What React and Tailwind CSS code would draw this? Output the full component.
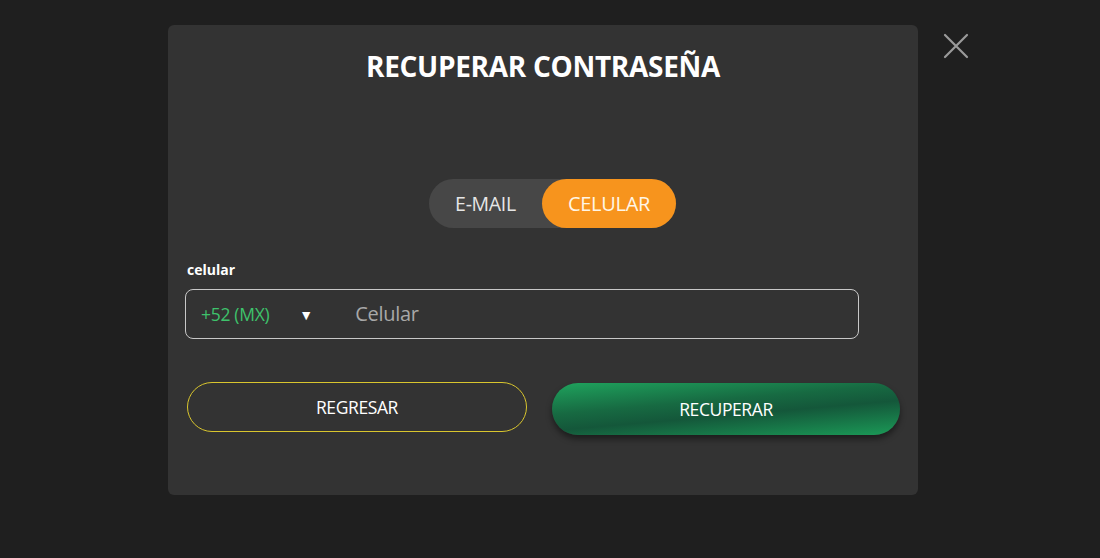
import { useState } from 'react';

const App = () => {
  const [mode, setMode] = useState('celular');

  return (
    <div className="w-[1100px] h-[558px] bg-[#1f1f1f] flex items-start" style={{ fontFamily: '"Open Sans", "Liberation Sans", sans-serif' }}>
      <div className="ml-[168px] mt-[25px] w-[750px] h-[470px] bg-[#333333] rounded-[6px] pl-[17px] flex flex-col">
        <h1 className="mt-[24px] pr-[17px] text-center text-white font-bold text-[28px] leading-[34px] tracking-[-0.3px]">
          RECUPERAR CONTRASEÑA
        </h1>

        <div className="mt-[96px] flex">
          <div className="ml-[244px] w-[247px] h-[49px] bg-[#474747] rounded-full flex">
            <button
              onClick={() => setMode('email')}
              className={`w-[113px] rounded-full text-[19.5px] tracking-[-0.3px] ${mode === 'email' ? 'bg-[#f7941d] text-[#fff6e6]' : 'text-[#e6e6e6]'}`}
            >
              E-MAIL
            </button>
            <button
              onClick={() => setMode('celular')}
              className={`w-[134px] rounded-full text-[20px] tracking-[-0.3px] ${mode === 'celular' ? 'bg-[#f7941d] text-[#fff6e6]' : 'text-[#e6e6e6]'}`}
            >
              CELULAR
            </button>
          </div>
        </div>

        <label className="mt-[32px] ml-[2px] text-white font-bold text-[14px] leading-[20px]">celular</label>
        <div className="mt-[9px] w-[674px] h-[50px] border border-[#c8c8c8] rounded-[8px] flex items-center">
          <span className="ml-[15px] text-[17.5px] tracking-[-0.3px] text-[#3ec26b]">+52 (MX)</span>
          <span className="ml-[30px] text-[14px] text-white">▼</span>
          <span className="ml-[42px] text-[20px] tracking-[-0.3px] text-[#a8a8a8]">Celular</span>
        </div>

        <div className="mt-[43px] flex items-start">
          <button className="ml-[2px] w-[340px] h-[50px] border-[1.5px] border-[#d9c62e] rounded-full text-white text-[17.5px] tracking-[-0.4px]">
            REGRESAR
          </button>
          <button className="ml-[25px] mt-[1px] w-[348px] h-[52px] rounded-full text-white text-[17.5px] tracking-[-0.4px] shadow-[0_4px_6px_rgba(0,0,0,0.45)] bg-[linear-gradient(175deg,#1fa35d_0%,#176a42_38%,#14573a_58%,#1b9a57_100%)]">
            RECUPERAR
          </button>
        </div>
      </div>

      <button className="ml-[25px] mt-[33px] w-[26px] h-[26px] text-[#9a9a9a]">
        <svg viewBox="0 0 26 26" width="26" height="26" fill="none" stroke="currentColor" strokeWidth="2.2" strokeLinecap="round">
          <path d="M2 2 L24 24 M24 2 L2 24" />
        </svg>
      </button>
    </div>
  );
};

export default App;
